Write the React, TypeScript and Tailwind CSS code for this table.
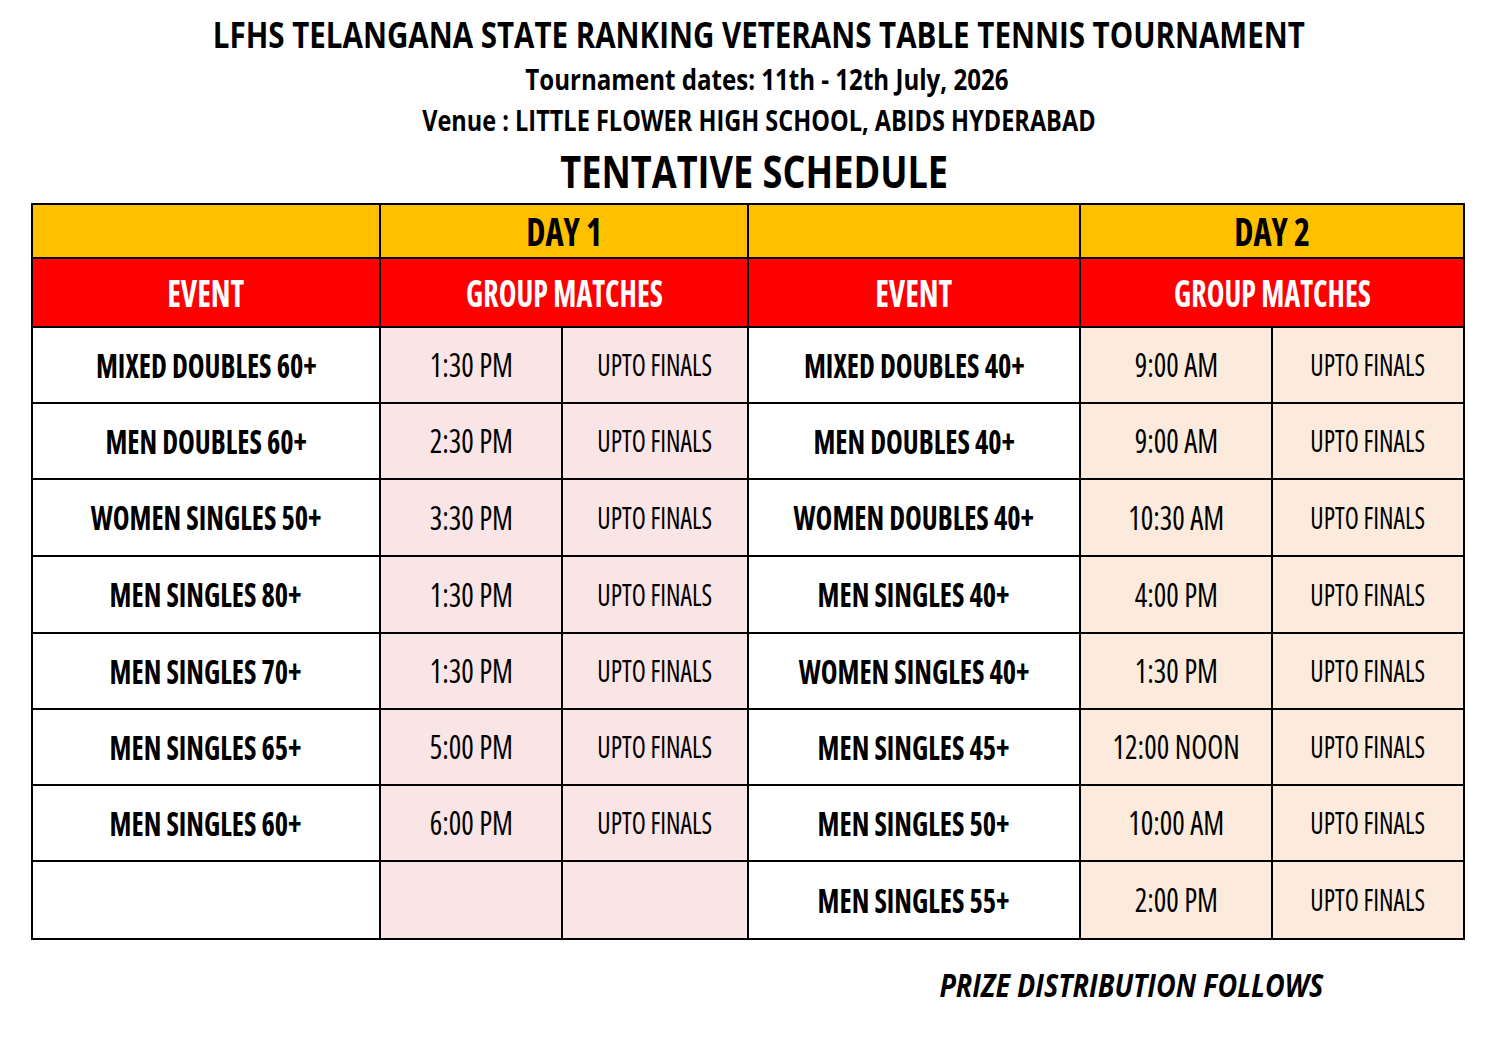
const day1: [string, string][] = [
  ["MIXED DOUBLES 60+", "1:30 PM"],
  ["MEN DOUBLES 60+", "2:30 PM"],
  ["WOMEN SINGLES 50+", "3:30 PM"],
  ["MEN SINGLES 80+", "1:30 PM"],
  ["MEN SINGLES 70+", "1:30 PM"],
  ["MEN SINGLES 65+", "5:00 PM"],
  ["MEN SINGLES 60+", "6:00 PM"],
  ["", ""],
];

const day2: [string, string][] = [
  ["MIXED DOUBLES 40+", "9:00 AM"],
  ["MEN DOUBLES 40+", "9:00 AM"],
  ["WOMEN DOUBLES 40+", "10:30 AM"],
  ["MEN SINGLES 40+", "4:00 PM"],
  ["WOMEN SINGLES 40+", "1:30 PM"],
  ["MEN SINGLES 45+", "12:00 NOON"],
  ["MEN SINGLES 50+", "10:00 AM"],
  ["MEN SINGLES 55+", "2:00 PM"],
];

function EventCell({ text }: { text: string }) {
  return (
    <div className="flex items-center justify-center bg-white">
      <span className="inline-block scale-x-[0.86] whitespace-nowrap text-[33px] font-bold leading-none font-stretch-condensed text-black">
        {text}
      </span>
    </div>
  );
}

function TimeCell({ text, tint }: { text: string; tint: "pink" | "peach" }) {
  return (
    <div className={`flex items-center justify-center ${tint === "pink" ? "bg-[#f9e4e6]" : "bg-[#fcebdd]"}`}>
      <span className="inline-block scale-x-[0.92] whitespace-nowrap text-[32px] font-normal leading-none font-stretch-condensed text-black">
        {text}
      </span>
    </div>
  );
}

function FinalsCell({ show, tint }: { show: boolean; tint: "pink" | "peach" }) {
  return (
    <div className={`flex items-center justify-center ${tint === "pink" ? "bg-[#f9e4e6]" : "bg-[#fcebdd]"}`}>
      {show && (
        <span className="inline-block scale-x-[0.86] whitespace-nowrap text-[30px] font-normal leading-none font-stretch-condensed text-black">
          UPTO FINALS
        </span>
      )}
    </div>
  );
}

export default function App() {
  const rows = day1.map((d, i) => ({ a: d, b: day2[i] }));
  return (
    <div className="min-h-[1053px] w-[1494px] bg-white font-['Open_Sans',sans-serif] text-black">
      <div className="flex flex-col items-center pl-[24px] pt-[13px]">
        <div className="scale-x-[0.82] whitespace-nowrap text-[36px] font-bold leading-[44px]">
          LFHS TELANGANA STATE RANKING VETERANS TABLE TENNIS TOURNAMENT
        </div>
        <div className="ml-[16px] mt-[2px] scale-x-[0.86] whitespace-nowrap text-[28px] font-bold leading-[40px]">
          Tournament dates: 11th - 12th July, 2026
        </div>
        <div className="mt-[1px] scale-x-[0.84] whitespace-nowrap text-[28px] font-bold leading-[40px]">
          Venue : LITTLE FLOWER HIGH SCHOOL, ABIDS HYDERABAD
        </div>
        <div className="mr-[10px] mt-[8px] scale-x-[0.821] whitespace-nowrap text-[44px] font-bold leading-[46px]">
          TENTATIVE SCHEDULE
        </div>
      </div>

      <div className="ml-[31px] mt-[9px] grid w-[1434px] grid-cols-[346px_180px_184px_330px_190px_190px] grid-rows-[52px_67px_74px_74px_75px_75px_74px_74px_74px_76px] gap-[2px] bg-black p-[2px]">
        {/* Yellow row */}
        <div className="bg-[#ffc000]" />
        <div className="col-span-2 flex items-center justify-center bg-[#ffc000]">
          <span className="inline-block scale-x-[0.86] text-[40px] font-bold leading-none font-stretch-condensed">DAY 1</span>
        </div>
        <div className="bg-[#ffc000]" />
        <div className="col-span-2 flex items-center justify-center bg-[#ffc000]">
          <span className="inline-block scale-x-[0.86] text-[40px] font-bold leading-none font-stretch-condensed">DAY 2</span>
        </div>

        {/* Red row */}
        <div className="flex items-center justify-center bg-[#ff0000]">
          <span className="inline-block scale-x-[0.86] text-[37px] font-bold leading-none font-stretch-condensed text-white">EVENT</span>
        </div>
        <div className="col-span-2 flex items-center justify-center bg-[#ff0000]">
          <span className="inline-block scale-x-[0.81] text-[37px] font-bold leading-none font-stretch-condensed text-white">GROUP MATCHES</span>
        </div>
        <div className="flex items-center justify-center bg-[#ff0000]">
          <span className="inline-block scale-x-[0.86] text-[37px] font-bold leading-none font-stretch-condensed text-white">EVENT</span>
        </div>
        <div className="col-span-2 flex items-center justify-center bg-[#ff0000]">
          <span className="inline-block scale-x-[0.81] text-[37px] font-bold leading-none font-stretch-condensed text-white">GROUP MATCHES</span>
        </div>

        {rows.map((r, i) => (
          <div key={i} className="contents">
            <EventCell text={r.a[0]} />
            <TimeCell text={r.a[1]} tint="pink" />
            <FinalsCell show={r.a[0] !== ""} tint="pink" />
            <EventCell text={r.b[0]} />
            <TimeCell text={r.b[1]} tint="peach" />
            <FinalsCell show={r.b[0] !== ""} tint="peach" />
          </div>
        ))}
      </div>

      <div className="mt-[25px] flex justify-end pr-[171px]">
        <span className="inline-block origin-right scale-x-[0.818] whitespace-nowrap text-[33px] font-bold italic leading-[40px]">
          PRIZE DISTRIBUTION FOLLOWS
        </span>
      </div>
    </div>
  );
}
